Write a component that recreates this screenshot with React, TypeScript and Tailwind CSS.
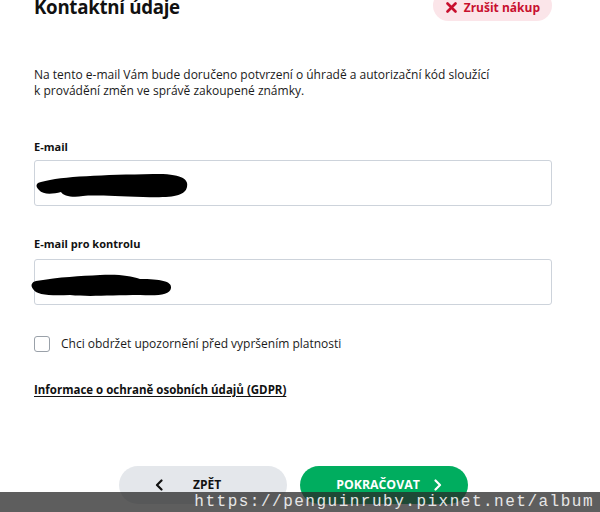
import React from "react";

function Scribble({ variant }: { variant: 1 | 2 }) {
  if (variant === 1) {
    return (
      <svg width="160" height="32" viewBox="0 0 160 32" className="block">
        <path
          d="M8 12 C30 6 70 5 120 4 C150 3 156 10 154 17 C152 26 140 28 110 27 C80 26 60 25 50 26 C40 28 30 26 28 22 C20 24 10 25 6 20 C2 16 3 13 8 12 Z"
          fill="#000"
        />
      </svg>
    );
  }
  return (
    <svg width="146" height="30" viewBox="0 0 146 30" className="block">
      <path
        d="M6 10 C30 6 50 5 70 4 C90 3 100 5 110 8 C130 8 142 10 141 17 C140 24 128 25 110 24 C80 24 60 26 40 24 C20 25 6 24 3 18 C0 14 2 11 6 10 Z"
        fill="#000"
      />
    </svg>
  );
}

function Field({
  label,
  variant,
  className,
  gap,
}: {
  label: string;
  variant: 1 | 2;
  className?: string;
  gap: string;
}) {
  return (
    <div className={className}>
      <div className="text-[11px] font-bold leading-[14px] text-[#111]">{label}</div>
      <div className={`relative ${gap} h-[46px] rounded-[3px] border border-[#cdd3db] bg-white`}>
        <div className={variant === 1 ? "absolute left-[-2px] top-[9px]" : "absolute left-[-5px] top-[11px]"}>
          <Scribble variant={variant} />
        </div>
      </div>
    </div>
  );
}

export default function App() {
  return (
    <div
      className="relative h-[512px] w-[600px] overflow-hidden bg-white text-[#1a1a1a]"
      style={{ fontFamily: '"Open Sans", "Noto Sans", sans-serif' }}
    >
      <div className="w-[552px] pl-[34px]">
        <div className="-mt-[5px] flex items-start justify-between">
          <h1 className="text-[18.7px] font-bold leading-[24px] tracking-[-0.3px] text-[#111]">Kontaktní údaje</h1>
          <button className="-mt-[5px] flex h-[31px] items-center gap-[7px] rounded-full bg-[#fbe5e9] pl-[13px] pr-[12px] pt-[4px] text-[12px] font-bold text-[#c8102e]">
            <svg width="11" height="11" viewBox="0 0 11 11">
              <path d="M1.5 1.5 L9.5 9.5 M9.5 1.5 L1.5 9.5" stroke="#c8102e" strokeWidth="2.6" strokeLinecap="round" />
            </svg>
            Zrušit nákup
          </button>
        </div>

        <p className="mt-[46px] text-[12px] leading-[16px]">
          Na tento e-mail Vám bude doručeno potvrzení o úhradě a autorizační kód sloužící
          <br />k provádění změn ve správě zakoupené známky.
        </p>

        <Field label="E-mail" variant={1} gap="mt-[6px]" className="mt-[41px]" />
        <Field label="E-mail pro kontrolu" variant={2} gap="mt-[8px]" className="mt-[31px]" />

        <label className="mt-[31px] flex items-center gap-[11px]">
          <span className="h-[16px] w-[16px] rounded-[3px] border border-[#9aa1a9] bg-white" />
          <span className="text-[12px] leading-[16px]">Chci obdržet upozornění před vypršením platnosti</span>
        </label>

        <a className="mt-[30px] block text-[11.5px] font-bold leading-[16px] text-[#111] underline underline-offset-2">
          Informace o ochraně osobních údajů (GDPR)
        </a>
      </div>

      <div className="mt-[68px] flex gap-[13px] pl-[119px]">
        <button className="flex h-[38px] w-[168px] items-center rounded-full bg-[#e4e7eb] pl-[36px] text-[12px] font-bold text-[#111]">
          <svg width="8" height="12" viewBox="0 0 8 12">
            <path d="M6.5 1.5 L2 6 L6.5 10.5" stroke="#111" strokeWidth="2.2" fill="none" strokeLinecap="round" strokeLinejoin="round" />
          </svg>
          <span className="ml-[30px]">ZPĚT</span>
        </button>
        <button className="flex h-[38px] w-[168px] items-center justify-center gap-[14px] rounded-full bg-[#00ad5f] pl-[10px] text-[12.3px] font-bold text-white">
          POKRAČOVAT
          <svg width="8" height="12" viewBox="0 0 8 12">
            <path d="M1.5 1.5 L6 6 L1.5 10.5" stroke="#fff" strokeWidth="2.2" fill="none" strokeLinecap="round" strokeLinejoin="round" />
          </svg>
        </button>
      </div>

      <div className="absolute bottom-0 left-0 flex h-[20px] w-full items-center justify-end bg-[rgba(40,40,40,0.75)] pr-[6px]">
        <span
          className="text-[16px] leading-[20px] tracking-[1.5px] text-[#e6e6e6]"
          style={{ fontFamily: '"Liberation Mono", monospace' }}
        >
          https://penguinruby.pixnet.net/album
        </span>
      </div>
    </div>
  );
}
